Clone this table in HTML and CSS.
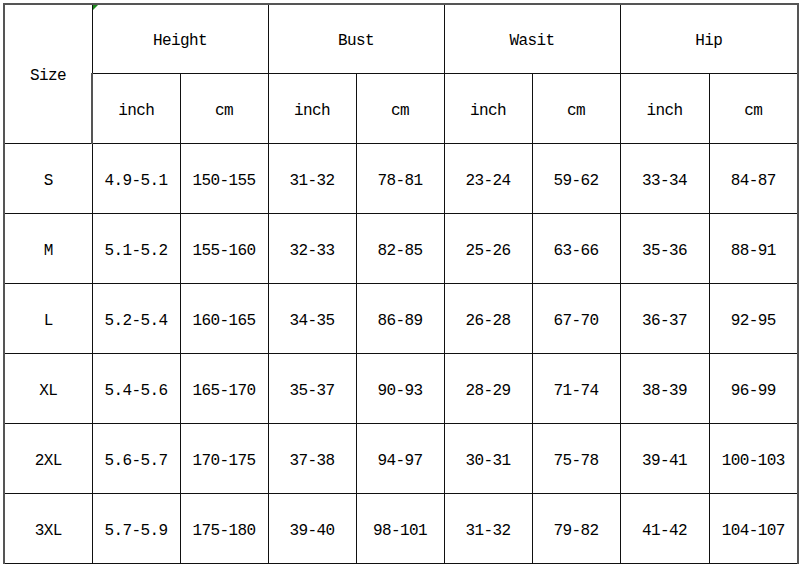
FILE: index.html
```html
<!DOCTYPE html>
<html>
<head>
<meta charset="utf-8">
<link rel="stylesheet" href="styles.css">
</head>
<body>
<div class="sheet">
<table class="size-table">
  <colgroup>
    <col class="c88"><col class="c88"><col class="c88"><col class="c88"><col class="c88"><col class="c88"><col class="c88"><col class="c89"><col class="c89">
  </colgroup>
  <tr>
    <td rowspan="2" class="size-head">Size</td>
    <td colspan="2" class="group selected">Height</td>
    <td colspan="2" class="group">Bust</td>
    <td colspan="2" class="group">Wasit</td>
    <td colspan="2" class="group">Hip</td>
  </tr>
  <tr>
    <td>inch</td><td>cm</td><td>inch</td><td>cm</td><td>inch</td><td>cm</td><td>inch</td><td>cm</td>
  </tr>
  <tr><td>S</td><td>4.9-5.1</td><td>150-155</td><td>31-32</td><td>78-81</td><td>23-24</td><td>59-62</td><td>33-34</td><td>84-87</td></tr>
  <tr><td>M</td><td>5.1-5.2</td><td>155-160</td><td>32-33</td><td>82-85</td><td>25-26</td><td>63-66</td><td>35-36</td><td>88-91</td></tr>
  <tr><td>L</td><td>5.2-5.4</td><td>160-165</td><td>34-35</td><td>86-89</td><td>26-28</td><td>67-70</td><td>36-37</td><td>92-95</td></tr>
  <tr><td>XL</td><td>5.4-5.6</td><td>165-170</td><td>35-37</td><td>90-93</td><td>28-29</td><td>71-74</td><td>38-39</td><td>96-99</td></tr>
  <tr><td>2XL</td><td>5.6-5.7</td><td>170-175</td><td>37-38</td><td>94-97</td><td>30-31</td><td>75-78</td><td>39-41</td><td>100-103</td></tr>
  <tr><td>3XL</td><td>5.7-5.9</td><td>175-180</td><td>39-40</td><td>98-101</td><td>31-32</td><td>79-82</td><td>41-42</td><td>104-107</td></tr>
</table>
</div>
</body>
</html>
```
FILE: styles.css
```css
html, body {
  margin: 0;
  padding: 0;
  background: #ffffff;
}
.sheet {
  padding: 3px 0 0 3px;
  width: 800px;
  height: 564px;
  box-sizing: border-box;
  overflow: hidden;
}
.size-table {
  border-collapse: collapse;
  table-layout: fixed;
  width: 796px;
  font-family: "Liberation Mono", "DejaVu Sans Mono", monospace;
  font-size: 16px;
  letter-spacing: -0.6px;
  color: #000;
}
.c88 { width: 88px; }
.c89 { width: 89px; }
.size-table td {
  border: 1px solid #111;
  height: 70px;
  padding: 5px 0 0 0;
  box-sizing: border-box;
  text-align: center;
  vertical-align: middle;
  white-space: nowrap;
}
.size-table td.group {
  height: 69px;
}
.size-table tr:first-child td {
  border-top: 2px solid #555;
}
.size-table tr td:first-child {
  border-left: 2px solid #555;
}
.size-table tr td:last-child {
  border-right: 2px solid #555;
}
.selected {
  position: relative;
}
.selected::before {
  content: "";
  position: absolute;
  left: 0;
  top: 0;
  width: 0;
  height: 0;
  border-top: 5px solid #1f8a1f;
  border-right: 5px solid transparent;
}
```
